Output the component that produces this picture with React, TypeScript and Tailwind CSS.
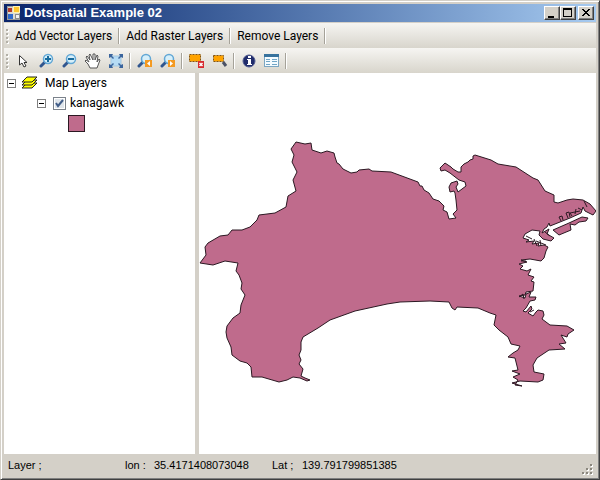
import { useState } from 'react'
import type { ReactNode } from 'react'

const COAST =
  'M296 142L305 144L311 143L312 150L321 153L327 151L334 153L335 157L337 163L339 164L343 169L351 173L357 172L359 170L369 169L372 171L391 172L418 182L420 186L422 186L424 190L429 193L433 199L439 201L444 206L443 210L447 212L449 219L456 218L453 214L457 210L456 200L455 193L454 191L450 192L449 187L451 183L457 181L458 184L456 187L458 192L466 186L465 182L459 180L450 173L445 170L441 171L440 168L445 163L448 165L451 167L453 169L458 172L461 172L461 167L464 164L468 162L470 160L473 159L473 156L475 155L491 160L498 164L516 167L533 178L538 180L545 191L554 195L554 202L558 203L567 200L573 199L583 200L590 204L596 211L593 215L585 211L583 207L581 213L570 218L560 222L550 226L549 223L547 227L544 229L542 233L549 229L547 234L554 238L551 241L543 239L539 235L540 231L532 230L525 234L523 238L529 240L526 242L534 241L532 244L539 243L538 246L544 245L548 247L546 251L544 258L541 261L530 259L521 260L527 262L519 264L523 266L520 269L527 271L531 269L528 275L534 277L531 281L534 282L533 291L526 292L525 295L519 296L525 298L526 294L531 292L529 297L536 297L535 300L530 301L526 308L523 311L526 312L531 306L532 309L528 313L533 316L536 312L538 310L543 311L544 315L542 319L550 325L567 326L574 330L568 334L567 337L561 335L566 343L559 344L565 349L549 350L537 358L533 365L534 372L544 374L543 380L538 382L520 381L512 383L522 386L515 385L518 380L513 377L520 374L512 371L518 370L517 366L515 358L508 357L513 353L518 350L520 346L511 344L508 337L499 330L494 325L496 315L490 313L478 308L457 307L455 310L452 308L449 302L430 301L400 302L387 304L355 311L330 320L318 328L303 337L301 342L301 350L299 355L301 360L299 364L303 369L301 376L305 378L310 380L307 381L300 378L293 377L287 380L279 382L262 377L252 377L251 367L247 363L240 361L232 355L231 347L227 338L226 332L227 326L233 318L240 313L241 305L245 295L241 289L242 283L239 275L236 271L238 263L225 261L213 265L200 263L206 255L205 247L208 243L220 236L228 235L232 230L242 230L250 227L257 220L259 215L275 213L286 207L288 196L296 191L293 180L297 172L295 168L292 162L294 155L291 149Z'

const ISLANDS =
  'M553 230L569 223L582 217L588 218L586 221L579 222L575 225L570 224L571 230L559 235Z'

const PIERS =
  'M561 221L559 217L562 216L563 220M568 218L566 213L569 212L570 217M572 216L570 213L580 211M576 209L575 214M578 208L582 210M584 201L587 207M526 236L532 239M536 241L546 245M540 240L541 246M534 239L537 246M545 232L550 236M521 261L526 261M519 297L523 294L524 299M530 312L534 310'

function Icon({ children }: { children: ReactNode }) {
  return (
    <svg viewBox="0 0 16 16" className="h-4 w-4" aria-hidden>
      {children}
    </svg>
  )
}

function Magnifier({ children }: { children?: ReactNode }) {
  return (
    <Icon>
      <path d="M2 13L6 9" stroke="#31568f" strokeWidth="3" strokeLinecap="round" />
      <circle cx="9" cy="6" r="4.5" fill="#d6effa" stroke="#62a7d5" strokeWidth="1.5" />
      {children}
    </Icon>
  )
}

function ToolButton({ label, children }: { label: string; children: ReactNode }) {
  return (
    <button type="button" aria-label={label} className="flex h-6 w-[23px] items-center justify-center">
      {children}
    </button>
  )
}

function Separator() {
  return <span className="mx-[2px] h-4 w-[2px] border-l border-[#a5a299] border-r border-r-white" />
}

function Grip() {
  return (
    <svg viewBox="0 0 3 16" className="h-4 w-[3px]" aria-hidden>
      {[1, 5, 9, 13].map((y) => (
        <g key={y}>
          <rect x="1" y={y + 1} width="2" height="2" fill="#fff" />
          <rect x="0" y={y} width="2" height="2" fill="#b3b0a7" />
        </g>
      ))}
    </svg>
  )
}

function CaptionButton({ label, children }: { label: string; children: ReactNode }) {
  return (
    <button
      type="button"
      aria-label={label}
      className="h-[14px] w-4 border border-t-white border-l-white border-r-[#404040] border-b-[#404040] bg-[#d4d0c8] shadow-[inset_-1px_-1px_0_#808080]"
    >
      <svg viewBox="0 0 14 12" className="h-3 w-[14px]" shapeRendering="crispEdges" aria-hidden>
        {children}
      </svg>
    </button>
  )
}

function Expander({ open, label, onClick }: { open: boolean; label: string; onClick: () => void }) {
  return (
    <button type="button" aria-label={label} aria-expanded={open} onClick={onClick} className="h-[9px] w-[9px] border border-[#808080] bg-white">
      <svg viewBox="0 0 7 7" className="h-[7px] w-[7px]" shapeRendering="crispEdges" aria-hidden>
        <path d={open ? 'M1 3h5v1H1z' : 'M1 3h5v1H1zM3 1h1v5H3z'} />
      </svg>
    </button>
  )
}

function TitleBar() {
  return (
    <header className="flex h-[18px] items-center bg-linear-to-r from-[#0a246a] to-[#a6caf0] pr-[2px] pl-[2px]">
      <svg viewBox="0 0 16 16" className="h-4 w-4" aria-hidden>
        <rect x="1.500" y="1.500" width="12" height="13" fill="#dcd9cf" stroke="#999" />
        <rect x="2" y="3" width="4" height="4" fill="#b33b2b" />
        <rect x="2" y="9" width="5" height="5" fill="#2f69ca" />
        <rect x="7.500" y="1.500" width="6" height="6" fill="#ffc62e" stroke="#fff1b0" />
        <rect x="9.500" y="9.500" width="4" height="4" fill="#f2f2f2" stroke="#8b8b8b" />
      </svg>
      <h1 className="ml-[2px] flex-1 text-[13px] leading-[18px] font-bold text-white">Dotspatial Example 02</h1>
      <div className="flex">
        <CaptionButton label="Minimize">
          <path d="M3 9h6v2H3z" />
        </CaptionButton>
        <CaptionButton label="Maximize">
          <path fillRule="evenodd" d="M2 1h9v9H2zM3 3v6h7V3z" />
        </CaptionButton>
        <span className="w-[2px]" />
        <CaptionButton label="Close">
          <path d="M3 2h2v1h1v1h2V3h1V2h2v1h-1v1H9v1H8v1h1v1h1v1h1v1H9V8H8V7H6v1H5v1H3V8h1V7h1V6h1V5H5V4H4V3H3z" />
        </CaptionButton>
      </div>
    </header>
  )
}

function MenuBar() {
  return (
    <nav className="flex h-[25px] items-center bg-linear-to-b from-[#f6f5f2] to-[#d8d5cc] pl-[2px]">
      <Grip />
      <span className="w-1" />
      {['Add Vector Layers', 'Add Raster Layers', 'Remove Layers'].map((item) => (
        <div key={item} className="flex items-center">
          <button type="button" className="px-[2px] font-[Roboto,sans-serif] text-[12px] leading-4 whitespace-nowrap">
            {item}
          </button>
          <span className="mx-1 h-4 w-[2px] border-l border-[#a5a299] border-r border-r-white" />
        </div>
      ))}
    </nav>
  )
}

function ToolBar() {
  return (
    <div role="toolbar" aria-label="Map tools" className="flex h-[25px] items-center bg-linear-to-b from-[#f6f5f2] to-[#d8d5cc] pl-[2px]">
      <Grip />
      <span className="w-[3px]" />
      <ToolButton label="Select">
        <Icon>
          <path d="M3.500 2.500V12L6 10L8 14L10 13L8 9.500H11Z" fill="#fff" stroke="#333" />
        </Icon>
      </ToolButton>
      <ToolButton label="Zoom in">
        <Magnifier>
          <path d="M9 3v6M6 6h6" stroke="#176b9e" strokeWidth="2" />
        </Magnifier>
      </ToolButton>
      <ToolButton label="Zoom out">
        <Magnifier>
          <path d="M6 6h6" stroke="#176b9e" strokeWidth="2" />
        </Magnifier>
      </ToolButton>
      <ToolButton label="Pan">
        <Icon>
          <path d="M5 15L3 11L0 8L1 7L4 9L1 4L2 3L5 7L4 2L5 1L8 7L8 1L10 1L10 7L12 2L13 3L12 9L14 6L15 7L12 15Z" fill="#fff" stroke="#555" />
        </Icon>
      </ToolButton>
      <ToolButton label="Zoom to full extent">
        <Icon>
          <rect x="3" y="3" width="10" height="10" fill="#b6dcf5" stroke="#a5c8e0" />
          <path d="M1 5V1H5L4 3L6 5L5 6L3 4ZM11 1H15V5L13 4L11 6L10 5L12 3ZM1 11L3 12L5 10L6 11L4 13L5 15H1ZM15 11V15H11L12 13L10 11L11 10L13 12Z" fill="#3b659d" />
        </Icon>
      </ToolButton>
      <Separator />
      <ToolButton label="Zoom previous">
        <Magnifier>
          <rect x="8" y="7" width="7" height="7" fill="#f49a21" />
          <path d="M13 8V13L10 10.500Z" fill="#fff" />
        </Magnifier>
      </ToolButton>
      <ToolButton label="Zoom next">
        <Magnifier>
          <rect x="8" y="7" width="7" height="7" fill="#f49a21" />
          <path d="M10 8V13L13 10.500Z" fill="#fff" />
        </Magnifier>
      </ToolButton>
      <Separator />
      <ToolButton label="Clear selection">
        <Icon>
          <rect x="0.500" y="1.500" width="11" height="7" fill="#ffa300" stroke="#805416" strokeDasharray="2 1" />
          <rect x="9" y="8" width="6" height="7" fill="#d72c31" />
          <path d="M10.500 10L13.500 13M13.500 10L10.500 13" stroke="#fff" strokeWidth="1.5" />
        </Icon>
      </ToolButton>
      <ToolButton label="Zoom to selection">
        <Icon>
          <rect x="1.500" y="2.500" width="10" height="6" fill="#ffa300" stroke="#805416" strokeDasharray="2 1" />
          <path d="M11 9L14 13" stroke="#4b5266" strokeWidth="3" />
        </Icon>
      </ToolButton>
      <Separator />
      <ToolButton label="Identify">
        <Icon>
          <circle cx="8" cy="8" r="6" fill="#202c6b" stroke="#515b91" />
          <path d="M7 3h3v2H7zM6 6h4v5h1v1H6v-1h1V7H6z" fill="#fff" />
        </Icon>
      </ToolButton>
      <ToolButton label="Attribute table">
        <Icon>
          <rect x="0.500" y="1.500" width="14" height="12" fill="#f4fbff" stroke="#7ba6c2" />
          <path d="M0 1h15v3H0z" fill="#37729d" />
          <path d="M2 6.500h4M8 6.500h5M2 8.500h4M8 8.500h5M2 11.500h4M8 11.500h5" stroke="#70a5c6" />
        </Icon>
      </ToolButton>
      <Separator />
    </div>
  )
}

function Legend({ visible, onVisibleChange }: { visible: boolean; onVisibleChange: (value: boolean) => void }) {
  const [mapOpen, setMapOpen] = useState(true)
  const [layerOpen, setLayerOpen] = useState(true)

  return (
    <aside className="w-[191px] shrink-0 bg-white pl-[3px]">
      <div className="flex h-5 items-center">
        <Expander open={mapOpen} label="Toggle map layers" onClick={() => setMapOpen(!mapOpen)} />
        <svg viewBox="0 0 18 14" className="ml-[5px] h-[14px] w-[18px]" aria-hidden>
          {[9, 6, 3].map((y) => (
            <path key={y} d={`M1 ${y + 3}L6 ${y - 2}H16L11 ${y + 3}Z`} fill="#ff0" stroke="#222" />
          ))}
        </svg>
        <span className="ml-[6px] font-[Roboto,sans-serif] text-[12px]">Map Layers</span>
      </div>
      {mapOpen ? (
        <div className="pl-[30px]">
          <div className="flex h-5 items-center">
            <Expander open={layerOpen} label="Toggle kanagawk" onClick={() => setLayerOpen(!layerOpen)} />
            <label className="ml-[7px] flex items-center gap-1 font-[Roboto,sans-serif] text-[12px]">
              <span className="grid h-[13px] w-[13px]">
                <input
                  type="checkbox"
                  checked={visible}
                  onChange={(e) => onVisibleChange(e.target.checked)}
                  className="col-start-1 row-start-1 h-[13px] w-[13px] appearance-none border border-[#7b828b] bg-[#dfe5eb] shadow-[inset_0_0_0_1px_white]"
                />
                {visible ? (
                  <svg viewBox="0 0 13 13" className="pointer-events-none col-start-1 row-start-1 h-[13px] w-[13px]" aria-hidden>
                    <path d="M3 6L5 9L10 3" fill="none" stroke="#415d88" strokeWidth="2" />
                  </svg>
                ) : null}
              </span>
              kanagawk
            </label>
          </div>
          {layerOpen ? <div className="mt-[2px] ml-[31px] h-[17px] w-[17px] border border-[#2b1822] bg-[#bf6b8c]" /> : null}
        </div>
      ) : null}
    </aside>
  )
}

function StatusBar() {
  return (
    <footer className="flex h-[22px] items-center pr-[2px] pl-1 text-[11px] whitespace-nowrap">
      <span className="w-[117px]">Layer ;</span>
      <span className="w-[29px]">lon :</span>
      <span className="w-[118px]">35.4171408073048</span>
      <span className="w-[30px]">Lat ;</span>
      <span className="flex-1">139.791799851385</span>
      <svg viewBox="0 0 12 12" className="h-3 w-3 self-end" shapeRendering="crispEdges" aria-hidden>
        {[[8, 0], [4, 4], [8, 4], [0, 8], [4, 8], [8, 8]].map(([x, y]) => (
          <g key={`${x}-${y}`}>
            <rect x={x + 1} y={y + 1} width="2" height="2" fill="#fff" />
            <rect x={x} y={y} width="2" height="2" fill="#8b877e" />
          </g>
        ))}
      </svg>
    </footer>
  )
}

export default function App() {
  const [visible, setVisible] = useState(true)

  return (
    <div className="flex min-h-dvh flex-col border border-t-[#d4d0c8] border-r-[#404040] border-b-[#404040] border-l-[#d4d0c8] bg-[#d4d0c8] p-[3px] font-['Liberation_Sans','Noto_Sans_CJK_JP',sans-serif] text-black shadow-[inset_1px_1px_0_white,inset_-1px_-1px_0_#808080]">
      <TitleBar />
      <div className="mt-px">
        <MenuBar />
        <ToolBar />
      </div>
      <main className="flex flex-1">
        <Legend visible={visible} onVisibleChange={setVisible} />
        <div className="w-1 shrink-0" />
        <section aria-label="Map" className="flex min-w-0 flex-1 bg-white">
          <svg viewBox="199 73 397 381" className="w-full" role="img" aria-label="Kanagawa">
            {visible ? (
              <g fill="#bf6b8c" stroke="#2b1822" strokeLinejoin="round">
                <path d={COAST} />
                <path d={ISLANDS} />
                <path d={PIERS} fill="none" />
              </g>
            ) : null}
          </svg>
        </section>
      </main>
      <StatusBar />
    </div>
  )
}
